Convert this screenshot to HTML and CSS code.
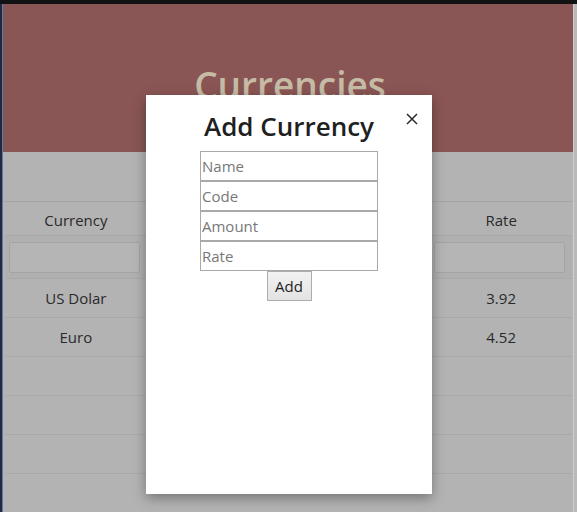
FILE: index.html
```html
<!DOCTYPE html>
<html lang="en">
<head>
<meta charset="utf-8">
<title>Currencies</title>
<link rel="stylesheet" href="styles.css">
</head>
<body>
<div class="screen">
  <div class="window">
    <header class="hero"><h1 class="hero-title">Currencies</h1></header>
    <div class="toolbar"></div>
    <table class="grid">
      <thead>
        <tr class="head-row"><th>Currency</th><th>Code</th><th>Amount</th><th>Rate</th></tr>
        <tr class="filter-row">
          <td><input class="filter" type="text"></td>
          <td><input class="filter" type="text"></td>
          <td><input class="filter" type="text"></td>
          <td><input class="filter" type="text"></td>
        </tr>
      </thead>
      <tbody>
        <tr><td>US Dolar</td><td>USD</td><td>1</td><td>3.92</td></tr>
        <tr><td>Euro</td><td>EUR</td><td>1</td><td>4.52</td></tr>
        <tr><td></td><td></td><td></td><td></td></tr>
        <tr><td></td><td></td><td></td><td></td></tr>
        <tr><td></td><td></td><td></td><td></td></tr>
        <tr><td></td><td></td><td></td><td></td></tr>
      </tbody>
    </table>
  </div>

  <div class="modal">
    <button class="modal-close" type="button" aria-label="Close">
      <svg width="12" height="12" viewBox="0 0 12 12"><path d="M1 1 L11 11 M11 1 L1 11" stroke="#2b2b2b" stroke-width="1.5" fill="none"/></svg>
    </button>
    <h2 class="modal-title">Add Currency</h2>
    <form class="modal-form">
      <input class="field" type="text" placeholder="Name">
      <input class="field" type="text" placeholder="Code">
      <input class="field" type="text" placeholder="Amount">
      <input class="field" type="text" placeholder="Rate">
      <button class="add-btn" type="button">Add</button>
    </form>
  </div>
</div>
</body>
</html>
```

FILE: styles.css
```css
html, body {
  margin: 0;
  padding: 0;
  height: 100%;
  overflow: hidden;
}

body {
  font-family: "Open Sans", "Noto Sans", sans-serif;
  color: #262626;
}

.screen {
  position: relative;
  width: 577px;
  height: 512px;
  box-sizing: border-box;
  border-top: 4px solid #111214;
  background: linear-gradient(90deg, #232a3e 0 2px, #b9b9b9 2px);
  display: flex;
}

.window {
  width: 570px;
  margin-left: 2px;
  border-left: 1px solid #5f79ae;
  border-right: 1px solid #cfcfcf;
  background: #b3b3b3;
  display: flex;
  flex-direction: column;
  overflow: hidden;
}

.hero {
  height: 150px;
  background: #8a5655;
  box-sizing: border-box;
  padding-top: 55px;
  text-align: center;
}

.hero-title {
  margin: 0;
  font-size: 37px;
  font-weight: 600;
  color: #c6bca6;
  line-height: normal;
  padding-left: 4px;
}

.toolbar {
  height: 50px;
  border-bottom: 1px solid #a5a5a5;
}

.grid {
  width: 567px;
  margin-left: 2px;
  border-collapse: collapse;
  table-layout: fixed;
  font-size: 15px;
}

.grid th {
  font-weight: 400;
  height: 31px;
  padding: 2px 0 0;
  text-align: center;
  color: #2a2a2a;
}

.filter-row td {
  height: 42px;
  border-top: 1px solid #a8a8a8;
  background: #b0b0b0;
  padding: 0;
}

.filter {
  display: block;
  width: 131px;
  height: 31px;
  box-sizing: border-box;
  margin: 0 0 0 4px;
  border: 1px solid #a4a4a4;
  border-radius: 2px;
  background: #b5b5b5;
}

.grid tbody td {
  height: 38px;
  padding: 0;
  border-top: 1px solid #a9a9a9;
  text-align: center;
  color: #2a2a2a;
}

.modal {
  position: absolute;
  left: 146px;
  top: 91px;
  width: 286px;
  height: 399px;
  background: #ffffff;
  box-shadow: 0 4px 12px rgba(0, 0, 0, 0.35);
  display: flex;
  flex-direction: column;
  align-items: center;
}

.modal-close {
  position: absolute;
  top: 17px;
  left: 259px;
  width: 14px;
  height: 14px;
  padding: 0;
  border: 0;
  background: transparent;
  display: flex;
  align-items: center;
  justify-content: center;
}

.modal-title {
  margin: 13px 0 7px;
  font-size: 26px;
  line-height: 36px;
  font-weight: 600;
  color: #1f1f1f;
}

.modal-form {
  display: flex;
  flex-direction: column;
  align-items: center;
}

.field {
  display: block;
  width: 178px;
  height: 30px;
  box-sizing: border-box;
  margin: 0;
  padding: 0 1px;
  border: 1px solid #a9a9a9;
  font-family: "Open Sans", "Noto Sans", sans-serif;
  font-size: 15px;
  color: #222;
  background: #fff;
}

.field::placeholder {
  color: #777;
}

.add-btn {
  width: 45px;
  height: 30px;
  margin: 0;
  padding: 0;
  border: 1px solid #adadad;
  border-radius: 0;
  background: linear-gradient(#f2f2f2, #e3e3e3);
  font-family: "Open Sans", "Noto Sans", sans-serif;
  font-size: 15px;
  color: #1f1f1f;
}
```
